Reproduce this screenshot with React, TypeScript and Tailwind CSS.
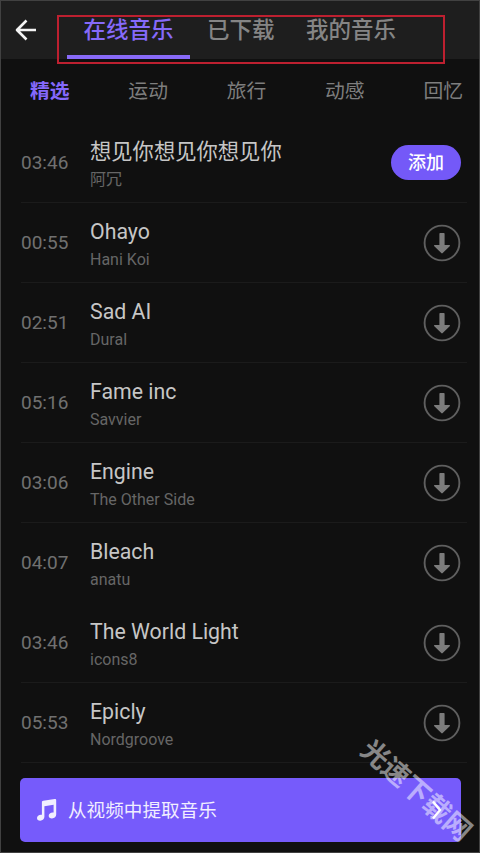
interface Track {
  time: string;
  title: string;
  artist: string;
  selected?: boolean;
}

const tracks: Track[] = [
  { time: '03:46', title: '想见你想见你想见你', artist: '阿冗', selected: true },
  { time: '00:55', title: 'Ohayo', artist: 'Hani Koi' },
  { time: '02:51', title: 'Sad AI', artist: 'Dural' },
  { time: '05:16', title: 'Fame inc', artist: 'Savvier' },
  { time: '03:06', title: 'Engine', artist: 'The Other Side' },
  { time: '04:07', title: 'Bleach', artist: 'anatu' },
  { time: '03:46', title: 'The World Light', artist: 'icons8' },
  { time: '05:53', title: 'Epicly', artist: 'Nordgroove' },
];

const categories = ['精选', '运动', '旅行', '动感', '回忆'];

const BackIcon = () => (
  <svg width="22" height="22" viewBox="0 0 22 22" fill="none" stroke="#f4f4f4" strokeWidth="2.6" strokeLinejoin="round">
    <path d="M21 11H2.5M11.5 1.5 2 11l9.5 9.5" />
  </svg>
);

const DownloadIcon = () => (
  <svg width="38" height="38" viewBox="0 0 38 38">
    <circle cx="19" cy="19" r="17.4" fill="none" stroke="#5f5f5f" strokeWidth="1.9" />
    <path
      d="M17.2 9h3.6a.8.8 0 0 1 .8.8V21h4.600c.8 0 1 .7.5 1.200l-7 6.900a1 1 0 0 1-1.400 0l-7-6.900c-.5-.5-.3-1.200.5-1.200h4.600V9.800a.8.8 0 0 1 .8-.8Z"
      fill="#7c7c7c"
    />
  </svg>
);

const NoteIcon = () => (
  <svg width="20" height="22" viewBox="0 0 20 22" fill="#f1eeff">
    <path d="M6.3 1.8 17.7.1c.9-.1 1.5.3 1.5 1.2v14.3c0 2-1.700 3.900-4.200 3.900-2 0-3.300-1.100-3.300-2.800 0-1.900 1.800-3.200 3.900-3.200h1V5.800L7.400 7.200v10.600c0 2.100-1.800 3.900-4.200 3.900-2 0-3.200-1.100-3.200-2.800 0-1.900 1.800-3.200 3.900-3.200h1V3.100c0-.8.5-1.200 1.400-1.300Z" />
  </svg>
);

const TrackRow = ({ track }: { track: Track }) => (
  <li className="flex h-20 items-center border-b border-[#1b1b1b] nth-6:border-transparent">
    <span className="w-[69px] pt-0.5 text-[19px] text-[#707070]">{track.time}</span>
    <div className="flex-1 pt-[3px]">
      <p className="h-8 text-[21.3px] leading-8 text-[#c6c6c6]">{track.title}</p>
      <p className="h-6 text-[16px] leading-6 text-[#666]">{track.artist}</p>
    </div>
    {track.selected ? (
      <button className="mr-1.5 h-[35px] w-[70px] rounded-full bg-[#7459f8] text-[18px] font-medium text-white">
        添加
      </button>
    ) : (
      <button className="mr-1.5 flex">
        <DownloadIcon />
      </button>
    )}
  </li>
);

export default function App() {
  return (
    <main className="relative flex h-[853px] w-[480px] flex-col overflow-hidden border border-[#414141] bg-[#101010] font-[Roboto,'Noto_Sans_CJK_SC',sans-serif]">
      <header className="flex h-[58px] shrink-0 bg-[#1e1e1e] text-[22.5px] font-medium leading-[59px] text-[#858585]">
        <button className="flex h-[58px] w-[66px] items-center pl-3.5">
          <BackIcon />
        </button>
        <nav className="flex">
          <a className="h-[58px] w-[123px] border-b-4 border-[#886af8] text-center text-[#866afa]">在线音乐</a>
          <a className="ml-[17px] w-[68px]">已下载</a>
          <a className="ml-[31px] w-[92px]">我的音乐</a>
        </nav>
      </header>
      <div className="absolute left-[56px] top-[14px] h-[49px] w-[388px] border-2 border-[#bd2030]" />

      <nav className="flex h-16 shrink-0 justify-between pl-[29px] pr-4 text-[19.8px] leading-[66px] text-[#7e7e7e]">
        {categories.map((name, i) => (
          <a key={name} className={i === 0 ? 'font-bold text-[#8468fa]' : ''}>
            {name}
          </a>
        ))}
      </nav>

      <ul className="pl-[20px] pr-3">
        {tracks.map((track) => (
          <TrackRow key={track.title} track={track} />
        ))}
      </ul>

      <button className="ml-[19px] mt-[15px] flex h-[64px] w-[441px] shrink-0 items-center rounded-[5px] bg-[#765bfb] pl-[17px] pr-[19px] text-[18.6px] text-[#f1eeff]">
        <NoteIcon />
        <span className="ml-[11px] pt-[3px]">从视频中提取音乐</span>
        <svg className="ml-auto" width="10" height="20" viewBox="0 0 10 20" fill="none" stroke="#fff" strokeWidth="2.4">
          <path d="m1 1.5 7 8.500-7 8.500" />
        </svg>
      </button>

      <span className="pointer-events-none absolute left-[346px] top-[772px] w-[138px] rotate-[41.5deg] whitespace-nowrap text-center text-[27.3px] font-bold leading-9 text-white/50">
        光速下载网
      </span>
    </main>
  );
}
